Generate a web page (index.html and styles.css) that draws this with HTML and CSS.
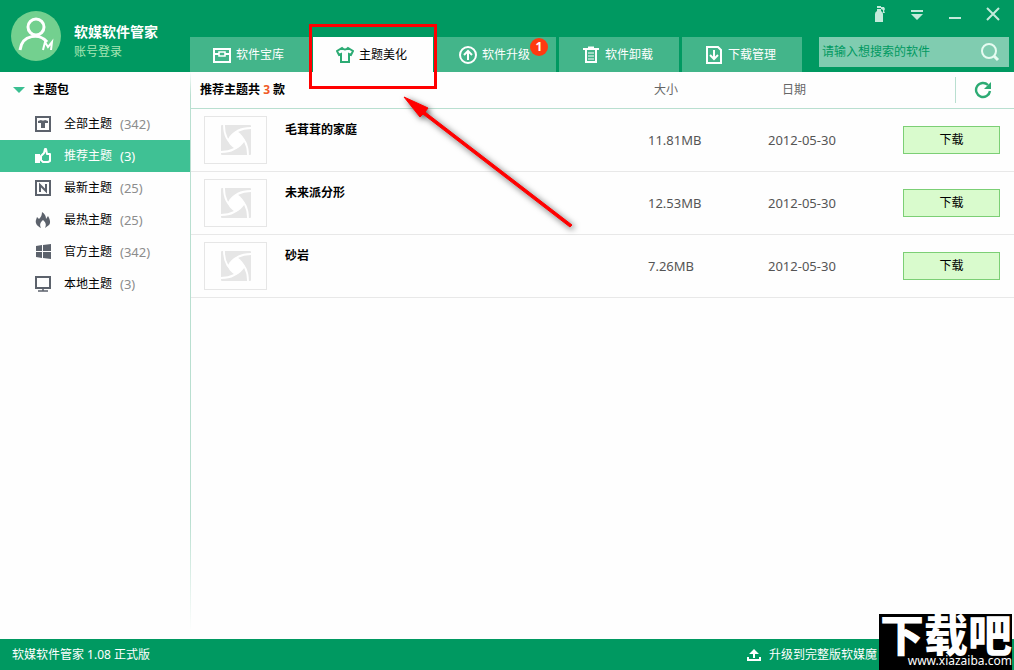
FILE: index.html
```html
<!DOCTYPE html>
<html lang="zh-CN">
<head>
<meta charset="utf-8">
<title>软媒软件管家</title>
<link rel="stylesheet" href="styles.css">
</head>
<body>
<svg class="defs" aria-hidden="true">
  <symbol id="placeholder" viewBox="0 0 30 30">
    <rect width="30" height="30" rx="1" fill="#e6e6e6"/>
    <path d="M3 0C3 9 6 17 14 21M30 3C21 3 13 6 9 14M27 30C27 21 24 13 16 9M0 27C9 27 17 24 21 16" fill="none" stroke="#fff" stroke-width="1.8"/>
    <path d="M7 14C9 10 12 7 16 6C20 9 23 12 24 16C21 20 18 23 14 24C10 21 7 18 7 14Z" fill="#fff"/>
  </symbol>
</svg>
<div class="app">
  <header class="header">
    <a class="user" href="#">
      <svg class="avatar" viewBox="0 0 50 50" aria-hidden="true">
        <circle cx="25" cy="25" r="25" fill="#73d08f"/>
        <circle cx="25" cy="16" r="8" fill="none" stroke="#fff" stroke-width="3"/>
        <path d="M9 39C11 23 29 22 36 31" fill="none" stroke="#fff" stroke-width="3"/>
        <path d="M32 39L34 31L37 36L41 31L40 39" fill="none" stroke="#fff" stroke-width="2"/>
      </svg>
      <span class="user-text">
        <strong class="user-name">软媒软件管家</strong>
        <span class="user-login">账号登录</span>
      </span>
    </a>
    <nav class="tabs">
      <a class="tab" href="#">
        <svg viewBox="0 0 18 18" fill="none" stroke="#fff" stroke-width="2" aria-hidden="true"><path d="M1 3H17V16H1ZM1 8H6M12 8H17"/><path d="M6 6H12V10H6Z" stroke-width="1.6"/></svg>
        <span>软件宝库</span>
      </a>
      <a class="tab tab-active" href="#">
        <svg viewBox="0 0 18 18" fill="none" stroke="#2dab74" stroke-width="2" aria-hidden="true"><path d="M6 2Q9 5 12 2L17 5L15 9L13 8V16H5V8L3 9L1 5Z"/></svg>
        <span>主题美化</span>
      </a>
      <a class="tab" href="#">
        <svg viewBox="0 0 18 18" fill="none" stroke="#fff" stroke-width="2" aria-hidden="true"><circle cx="9" cy="9" r="8"/><path d="M9 14V5M5 9L9 5L13 9"/></svg>
        <span>软件升级</span>
        <span class="badge">1</span>
      </a>
      <a class="tab" href="#">
        <svg viewBox="0 0 18 18" fill="none" stroke="#fff" stroke-width="2" aria-hidden="true"><path d="M1 3H17M4 4V16H14V4"/><path d="M6 1.5H12" /><path d="M6 7H12M6 10H12M6 13H12" stroke-width="1.2"/></svg>
        <span>软件卸载</span>
      </a>
      <a class="tab" href="#">
        <svg viewBox="0 0 18 18" fill="none" stroke="#fff" stroke-width="2" aria-hidden="true"><path d="M2 1H13L16 4V17H2Z"/><path d="M9 4V13M5 9L9 13L13 9"/></svg>
        <span>下载管理</span>
      </a>
    </nav>
    <div class="header-right">
      <div class="window-controls">
        <button type="button" aria-label="皮肤"><svg viewBox="0 0 16 18" fill="#c4eadb"><path d="M6 1H10V3H6ZM6 4H10V6Q12 7 12 9V17H4V9Q4 7 6 6ZM10 2H13L14 4L13 6L14 8H12V5L10 4Z"/></svg></button>
        <button type="button" aria-label="菜单"><svg viewBox="0 0 16 18" fill="#c4eadb"><path d="M2 5H14V7H2ZM2 9H14L8 15Z"/></svg></button>
        <button type="button" aria-label="最小化"><svg viewBox="0 0 16 18" fill="#c4eadb"><path d="M2 12H14V14H2Z"/></svg></button>
        <button type="button" aria-label="关闭"><svg viewBox="0 0 16 18" fill="none" stroke="#c4eadb" stroke-width="2"><path d="M2 3L14 15M14 3L2 15"/></svg></button>
      </div>
      <form class="search">
        <input type="text" aria-label="搜索软件" placeholder="请输入想搜索的软件">
        <button type="button" aria-label="搜索"><svg viewBox="0 0 20 20" fill="none" stroke="#e6fbf1"><circle cx="9" cy="9" r="7" stroke-width="2"/><path d="M14 14L18 18" stroke-width="3"/></svg></button>
      </form>
    </div>
  </header>

  <div class="body">
    <aside class="sidebar">
      <h2 class="group"><svg viewBox="0 0 12 6" aria-hidden="true"><path d="M0 0H12L6 6Z" fill="#3bbf92"/></svg>主题包</h2>
      <nav class="menu">
        <a class="item" href="#">
          <svg viewBox="0 0 16 16" aria-hidden="true"><path d="M1 1H15V15H1Z" fill="none" stroke="#5c626c" stroke-width="2"/><path d="M3 5L6 4Q8 5 10 4L13 5V7H10V12H6V7H3Z" fill="#5c626c"/></svg>
          <span class="label">全部主题</span><span class="count">(342)</span>
        </a>
        <a class="item item-active" href="#">
          <svg viewBox="0 0 16 16" aria-hidden="true"><path d="M0 6H5V15H0Z" fill="#fff"/><path d="M6 8L9 5L10 1H11L12 6H15V13L13 14H8L6 12Z" fill="none" stroke="#fff" stroke-width="2" stroke-linejoin="round"/></svg>
          <span class="label">推荐主题</span><span class="count">(3)</span>
        </a>
        <a class="item" href="#">
          <svg viewBox="0 0 16 16" fill="none" stroke="#5c626c" stroke-width="2" aria-hidden="true"><path d="M1 1H15V15H1Z"/><path d="M5 12V5L11 11V4"/></svg>
          <span class="label">最新主题</span><span class="count">(25)</span>
        </a>
        <a class="item" href="#">
          <svg viewBox="0 0 16 16" aria-hidden="true"><path d="M7 0C10 2 11 4 11 7L13 4C15 7 16 11 14 13L10 16C12 12 10 10 8 8C6 10 4 12 6 16C2 14 0 11 1 8L2 5L4 7C6 5 7 3 7 0Z" fill="#5c626c"/></svg>
          <span class="label">最热主题</span><span class="count">(25)</span>
        </a>
        <a class="item" href="#">
          <svg viewBox="0 0 16 16" aria-hidden="true"><path d="M1 2L7 1V7H1ZM8 1L16 0V7H8ZM1 8H7V14L1 13ZM8 8H16V15L8 14Z" fill="#5c626c"/></svg>
          <span class="label">官方主题</span><span class="count">(342)</span>
        </a>
        <a class="item" href="#">
          <svg viewBox="0 0 16 16" fill="none" stroke="#5c626c" stroke-width="2" aria-hidden="true"><path d="M1 1H15V12H1Z"/><path d="M8 12V15M3 15H13" stroke-width="1.5"/></svg>
          <span class="label">本地主题</span><span class="count">(3)</span>
        </a>
      </nav>
    </aside>

    <main class="content">
      <table class="themes">
        <thead>
          <tr>
            <th class="col-name">推荐主题共 <span class="total">3</span> 款</th>
            <th class="col-size">大小</th>
            <th class="col-date">日期</th>
            <th class="col-action">
              <div class="refresh">
                <button type="button" aria-label="刷新"><svg viewBox="0 0 18 18"><path d="M14 4A7 7 0 1 0 16 10" fill="none" stroke="#2dab74" stroke-width="2.4"/><path d="M17 1V8H10Z" fill="#2dab74"/></svg></button>
              </div>
            </th>
          </tr>
        </thead>
        <tbody>
          <tr>
            <td><div class="theme"><span class="thumb"><svg aria-hidden="true"><use href="#placeholder"/></svg></span><strong>毛茸茸的家庭</strong></div></td>
            <td class="num">11.81MB</td>
            <td class="num">2012-05-30</td>
            <td class="action"><button class="download" type="button">下载</button></td>
          </tr>
          <tr>
            <td><div class="theme"><span class="thumb"><svg aria-hidden="true"><use href="#placeholder"/></svg></span><strong>未来派分形</strong></div></td>
            <td class="num">12.53MB</td>
            <td class="num">2012-05-30</td>
            <td class="action"><button class="download" type="button">下载</button></td>
          </tr>
          <tr>
            <td><div class="theme"><span class="thumb"><svg aria-hidden="true"><use href="#placeholder"/></svg></span><strong>砂岩</strong></div></td>
            <td class="num">7.26MB</td>
            <td class="num">2012-05-30</td>
            <td class="action"><button class="download" type="button">下载</button></td>
          </tr>
        </tbody>
      </table>
    </main>
  </div>

  <footer class="footer">
    <span>软媒软件管家 1.08 正式版</span>
    <a class="upgrade" href="#">
      <svg viewBox="0 0 14 12" fill="#fff" aria-hidden="true"><path d="M7 0L12 5H8V9H6V5H2ZM0 8H2V10H12V8H14V12H0Z"/></svg>
      升级到完整版软媒魔
    </a>
  </footer>

  <svg class="arrow" viewBox="0 0 184 146" aria-hidden="true">
    <path d="M4 5L28 16L25 20L172 133L170 135L23 22L20 25Z" fill="#f00" stroke="#f00" stroke-width="1" stroke-linejoin="round"/>
  </svg>
  <div class="watermark">
    <span class="mark-name">下载吧</span>
    <span class="mark-url">www.xiazaiba.com</span>
  </div>
</div>
</body>
</html>
```
FILE: styles.css
```css
* { box-sizing: border-box; }

body {
  margin: 0;
  background: #fefefe;
  color: #000;
  font: 12px/18px "Noto Sans", "Noto Sans CJK SC", sans-serif;
}

a { color: inherit; text-decoration: none; }
svg { display: block; }
button {
  padding: 0;
  border: 0;
  background: none;
  font: inherit;
  cursor: pointer;
}

.defs { display: none; }

.app {
  position: relative;
  display: flex;
  flex-direction: column;
  min-height: 100vh;
  overflow: hidden;
}

/* Header */
.header {
  display: flex;
  align-items: flex-end;
  height: 72px;
  background: #009961;
  color: #fff;
}
.user {
  display: flex;
  flex: 0 0 190px;
  align-self: stretch;
  align-items: center;
  gap: 13px;
  padding-left: 11px;
}
.avatar { width: 50px; height: 50px; }
.user-text { display: flex; flex-direction: column; gap: 2px; padding-top: 11px; }
.user-name { font-size: 14px; }
.user-login { color: #a8e6b4; }

.tabs { display: flex; gap: 3px; }
.tab {
  position: relative;
  display: flex;
  align-items: center;
  gap: 5px;
  width: 120px;
  height: 35px;
  padding-left: 23px;
  background: #43b58a;
}
.tab svg { width: 18px; height: 18px; }
.tab-active { background: #fefefe; color: #000; }
.tab-active::after {
  position: absolute;
  z-index: 1;
  inset: -13px -4px -17px;
  border: 3px solid #f00;
  content: "";
}
.badge {
  position: absolute;
  top: 1px;
  right: 8px;
  width: 18px;
  border-radius: 50%;
  background: #ff3a10;
  font-weight: bold;
  text-align: center;
}

.header-right {
  display: flex;
  flex: 1;
  flex-direction: column;
  align-items: flex-end;
  gap: 14px;
  min-width: 0;
  padding: 0 5px 5px 17px;
}
.window-controls { display: flex; gap: 22px; padding-right: 8px; }
.window-controls svg { width: 16px; height: 18px; }
.search {
  display: flex;
  align-items: center;
  width: 100%;
  height: 30px;
  padding: 0 9px 0 3px;
  background: #80ccb0;
}
.search input {
  flex: 1;
  min-width: 0;
  padding: 0;
  border: 0;
  outline: 0;
  background: none;
  font: inherit;
}
.search input::placeholder { color: #009961; opacity: 1; }
.search svg { width: 20px; height: 20px; }

/* Sidebar */
.body { display: flex; flex: 1; }
.sidebar { flex: 0 0 190px; }
.group {
  display: flex;
  align-items: center;
  gap: 8px;
  height: 36px;
  margin: 0;
  padding-left: 13px;
  font-size: 12px;
}
.group svg { width: 12px; height: 6px; }
.item {
  display: flex;
  align-items: center;
  height: 32px;
  padding-left: 35px;
}
.item svg { width: 16px; height: 16px; margin-right: 13px; }
.label { margin-right: 8px; }
.count { color: #8c8c8c; font-size: 13px; }
.item-active { background: #3fc194; }
.item-active .label, .item-active .count { color: #fff; }

/* Theme list */
.content {
  flex: 1;
  margin-bottom: 8px;
  border-left: 1px solid;
  border-image: linear-gradient(#fefefe, #b9dfd0 24px, #b9dfd0 80%, #fefefe) 1;
}
.themes {
  width: 100%;
  border-collapse: separate;
  border-spacing: 0;
  table-layout: fixed;
}
.themes th {
  height: 37px;
  padding: 0;
  border-bottom: 1px solid #b9dfd0;
  color: #666;
  font-weight: normal;
  text-align: left;
}
.themes .col-name { padding-left: 9px; color: #000; font-weight: bold; }
.total { color: #f05a28; }
.themes .col-size { width: 120px; padding-left: 6px; }
.themes .col-date { width: 135px; padding-left: 14px; }
.themes .col-action { width: 111px; }
.refresh {
  display: flex;
  align-items: center;
  width: 59px;
  height: 26px;
  margin-left: auto;
  padding-left: 18px;
  border-left: 1px solid #b9dfd0;
}
.refresh svg { width: 18px; height: 18px; }
.themes td {
  height: 63px;
  padding: 0;
  border-bottom: 1px solid #e8e8e8;
}
.theme { display: flex; gap: 18px; padding-left: 13px; }
.theme strong { padding-top: 5px; }
.thumb {
  display: grid;
  place-items: center;
  width: 63px;
  height: 48px;
  border: 1px solid #e6e6e6;
}
.thumb svg { width: 30px; height: 30px; }
.num { color: #555; font-size: 13px; }
.download {
  width: 97px;
  height: 28px;
  border: 1px solid #7ccf75;
  background: #d9fbcd;
  color: #000;
}

/* Footer */
.footer {
  display: flex;
  align-items: center;
  justify-content: space-between;
  height: 31px;
  padding: 1px 137px 0 12px;
  background: #009961;
  color: #fff;
}
.upgrade { display: flex; align-items: center; gap: 8px; }
.upgrade svg { width: 14px; height: 12px; }

/* Overlays */
.arrow {
  position: absolute;
  top: 92px;
  left: 400px;
  width: 184px;
  height: 146px;
  filter: drop-shadow(2px 2px 3px #555);
  pointer-events: none;
}
.watermark {
  position: absolute;
  right: 2px;
  bottom: 0;
  display: flex;
  flex-direction: column;
  align-items: flex-end;
  width: 133px;
  height: 56px;
  background: #000;
  color: #fff;
}
.mark-name {
  font: 900 44px/38px "Noto Sans CJK SC", sans-serif;
}
.mark-url { font-size: 12px; line-height: 18px; }
```
